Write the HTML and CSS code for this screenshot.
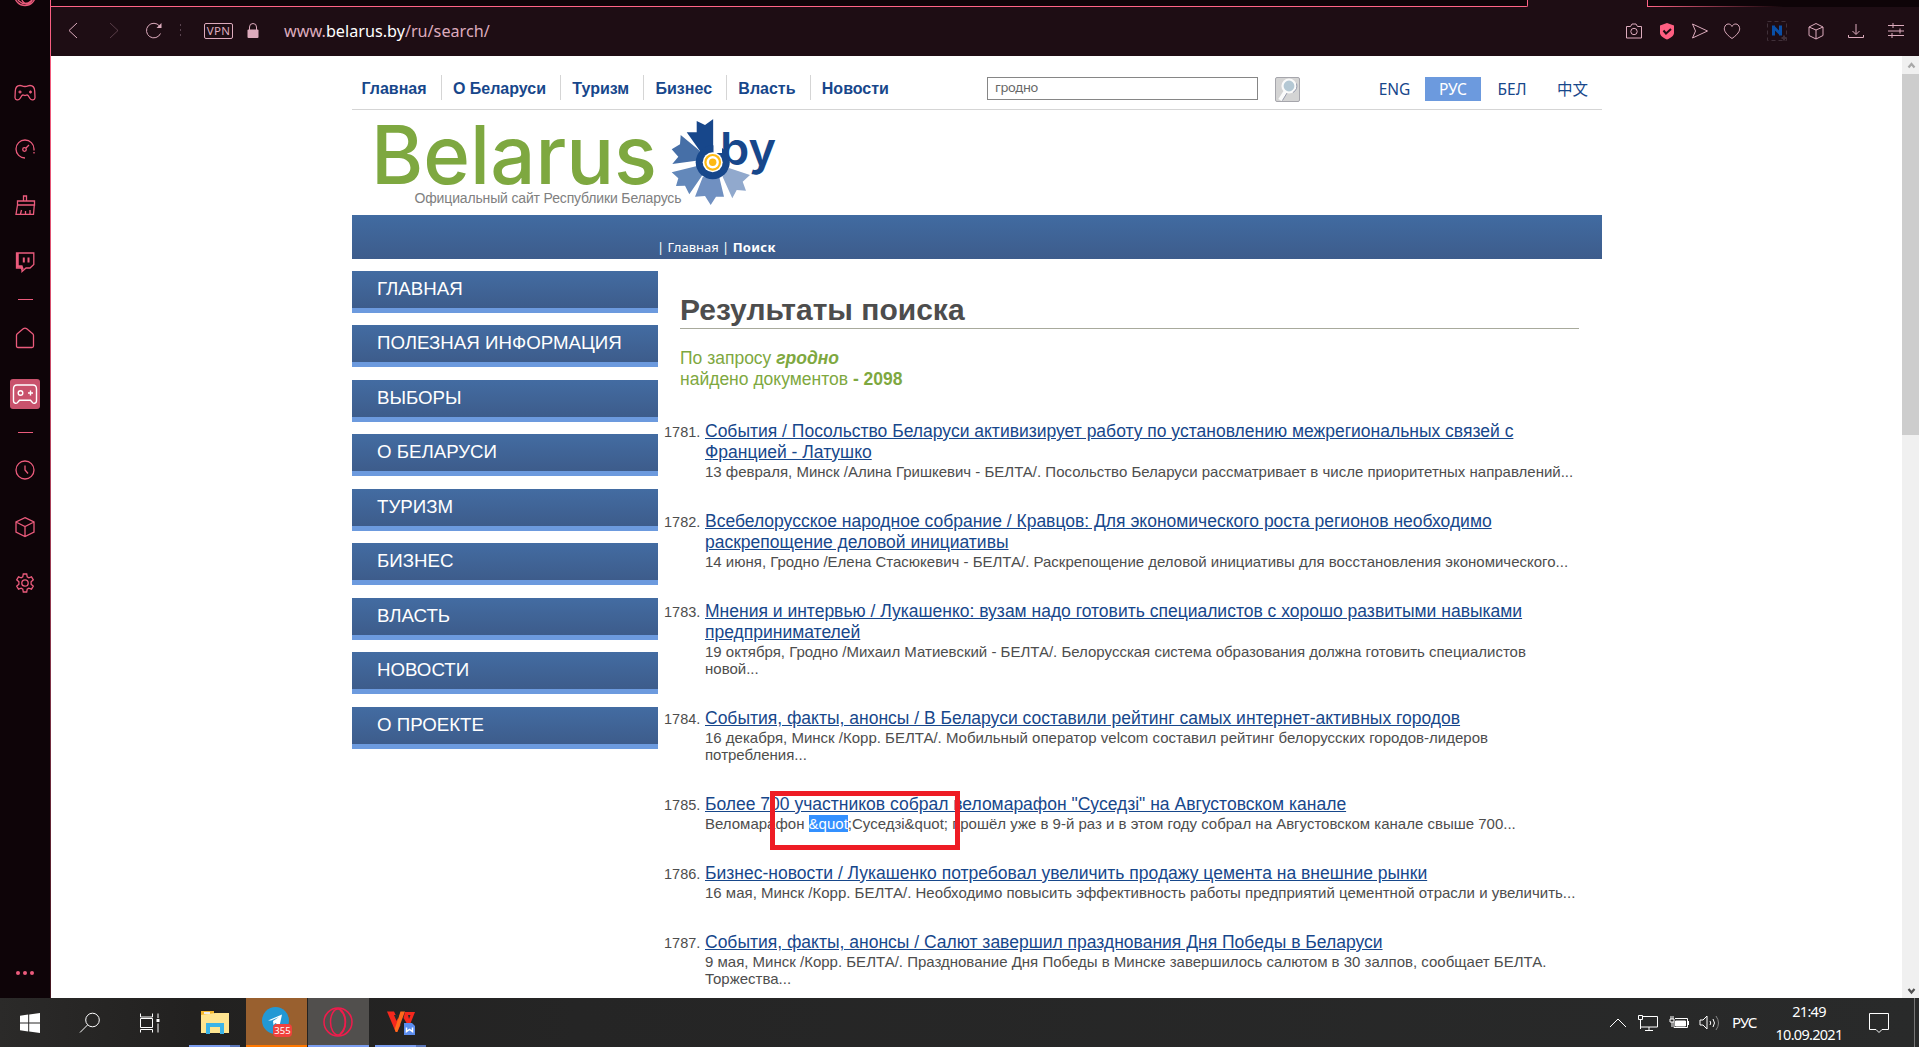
FILE: index.html
```
<!DOCTYPE html>
<html lang="ru">
<head>
<meta charset="utf-8">
<title>Результаты поиска</title>
<link rel="stylesheet" href="styles.css">
</head>
<body>
<div class="desktop">
  <div class="browser">
    <nav class="side">
      <div class="cell"><svg class="opera-top" width="24" height="12" viewBox="0 0 24 12"><circle cx="12" cy="-5" r="10.5"/><circle cx="12" cy="-5" r="8.5"/><ellipse cx="14" cy="-5" rx="6" ry="9"/></svg></div>
      <div class="cell"><svg width="22" height="18" viewBox="0 0 22 18"><path d="M6 1.5C3 1.500 1.500 3 1.300 7L1 13.500C1 16 4.500 17 6 14.500L8 11.500C9 10.300 10 11.500 11 11.500S13 10.300 14 11.500L16 14.500C17.500 17 21 16 21 13.500L20.700 7C20.500 3 19 1.500 16 1.500C14 1.500 14 2.500 11 2.500S8 1.500 6 1.500Z"/><path d="M4.500 8h3M6 6.500v3M15 8h3M16.500 6.500v3"/></svg></div>
      <div class="cell"><svg width="20" height="20" viewBox="0 0 20 20"><path d="M10 19A9 9 0 1 1 19 10"/><path d="M19 10v6" stroke-dasharray="1.500 1.500"/><circle cx="9.500" cy="10.500" r="1.800"/><path d="M11 9l3-3"/></svg></div>
      <div class="cell"><svg width="20" height="20" viewBox="0 0 20 20"><path d="M8.500 6V1h3v5M2.500 10V6h17v4zM2.500 10L1 19.300h17.500L19.300 10M5.500 19l1-4M10.500 19v-3M15 19v-4"/></svg></div>
      <div class="cell"><svg width="20" height="20" viewBox="0 0 20 20"><path d="M1.500 1h17.300v11.500L15 16h-4l-4 3.500V16H1.500z"/><path d="M2.500 1v13.500h4l1 3" stroke-width="2.500"/><path d="M8.800 5.500v5M13.500 5.500v5" stroke-width="2"/></svg></div>
      <div class="cell"><i class="dash"></i></div>
      <div class="cell"><svg width="20" height="22" viewBox="0 0 20 22"><path d="M1.500 8.500Q1.500 7.500 2.300 6.800L8.500 1.600Q10 .6 11.500 1.600L17.700 6.800Q18.500 7.500 18.500 8.500V19Q18.500 20.500 17 20.500H3Q1.500 20.500 1.500 19Z"/></svg></div>
      <div class="cell"><div class="active"><svg width="26" height="22" viewBox="0 0 26 22"><path d="M5 2H21Q24.500 2 24.500 6V17.500C24.500 21 21 21 20 19L18.500 17.200H7.500L6 19C5 21 1.500 21 1.500 17.500V6Q1.500 2 5 2Z"/><circle cx="8.500" cy="10" r="2.300"/><path d="M16 10h5M18.500 7.500v5"/></svg></div></div>
      <div class="cell"><i class="dash"></i></div>
      <div class="cell"><svg width="20" height="20" viewBox="0 0 20 20"><circle cx="10" cy="10" r="9"/><path d="M10 5.500V10l3 3.500"/></svg></div>
      <div class="cell"><svg width="20" height="20" viewBox="0 0 20 20"><path d="M10 .7L19 5v10l-9 4.500L1 15V5zM1 5l9 4.500L19 5M10 9.500v10"/></svg></div>
      <div class="cell"><svg width="20" height="20" viewBox="0 0 20 20"><path d="M8.300 1h3.400l.5 2.800 1.600 1 2.700-1 1.800 3-2.200 1.900v2.600l2.200 1.900-1.800 3-2.700-1-1.600 1-.5 2.800H8.300l-.5-2.800-1.600-1-2.700 1-1.800-3 2.200-1.900V8.700L1.700 6.800l1.800-3 2.700 1 1.600-1z"/><circle cx="10" cy="10" r="3.200"/></svg></div>
      <div class="cell"></div>
      <div class="cell"><svg width="20" height="6" viewBox="0 0 20 6"><g class="dots"><circle cx="3" cy="3" r="2"/><circle cx="10" cy="3" r="2"/><circle cx="17" cy="3" r="2"/></g></svg></div>
    </nav>

    <div class="window">
      <div class="tabs"><div class="tabs-left"></div><div class="tab"></div><div class="tabs-right"></div></div>
      <div class="toolbar">
        <svg class="back" width="10" height="17" viewBox="0 0 10 17"><path d="M9 1L1 8.500 9 16"/></svg>
        <svg class="fwd" width="10" height="17" viewBox="0 0 10 17"><path d="M1 1l8 7.500L1 16"/></svg>
        <svg class="reload" width="18" height="18" viewBox="0 0 18 18"><path d="M15.500 11.500A7.300 7.300 0 1 1 14.500 4"/><path d="M16.500 1v5h-5z" class="solid"/></svg>
        <i class="vdots"></i>
        <span class="vpn">VPN</span>
        <svg class="lock" width="12" height="17" viewBox="0 0 12 17"><path d="M2.500 8V5a3.500 3.500 0 0 1 7 0v3"/><rect class="solid" x=".5" y="7.500" width="11" height="8.500" rx="1"/></svg>
        <div class="url">www.<b>belarus.by</b>/ru/search/</div>
        <div class="tools">
          <svg viewBox="0 0 20 20"><path d="M2.500 5.500h4l1.500-2.500h4l1.500 2.500h4v11.500h-15z"/><circle cx="10" cy="10.500" r="3.200"/></svg>
          <svg viewBox="0 0 20 20"><path class="shield" d="M10 2l7 2.500v7.500c0 3-3.500 5-7 6.500-3.500-1.500-7-3.500-7-6.500V4.500z"/><path class="tick" d="M6.500 9.500l2.500 3 5-4.500"/></svg>
          <svg viewBox="0 0 20 20"><path d="M2.500 3L17.500 10 2.500 17l3-7z"/></svg>
          <svg viewBox="0 0 20 20"><path d="M10 17.500C2 12 2 8 2.500 6.500 3.500 2 8.500 2 10 5.500 11.500 2 16.500 2 17.500 6.500 18 8 18 12 10 17.500Z"/></svg>
          <svg viewBox="0 0 20 20"><rect class="ext" x=".5" y=".5" width="19" height="19"/><path class="n" d="M6.500 14.500V4.500M13.500 14.500V4.500"/><path class="n" d="M6.500 6l7 7"/><path class="plus" d="M17 14.500v5M14.500 17h5"/></svg>
          <svg viewBox="0 0 20 20"><path d="M10 2.500l7 3.500v8.500L10 18l-7-3.500V6zM3 6l7 3 7-3M10 9v9"/></svg>
          <svg viewBox="0 0 20 20"><path d="M10 3v10M6.500 10l3.500 3.500L13.500 10M2.500 14v2.500h15V14"/></svg>
          <svg viewBox="0 0 20 20"><path d="M2 4.500h16M2 10h16M2 14.500h16M7 2v5M14 7.500v5M6 12v5"/></svg>
        </div>
      </div>

      <div class="viewport">
        <main class="page">
          <header class="top">
            <nav class="topnav"><a>Главная</a><a>О Беларуси</a><a>Туризм</a><a>Бизнес</a><a>Власть</a><a>Новости</a></nav>
            <div class="search">гродно</div>
            <div class="go"><svg width="25" height="25" viewBox="0 0 25 25"><path d="M10.500 14.500L5 23" stroke="#fafafa" stroke-width="4"/><path d="M12 16L7.500 23.500" stroke="#9a9eb0" stroke-width="1"/><ellipse cx="14" cy="9" rx="6.500" ry="6.500" fill="#b4c8d4" stroke="#fafafa" stroke-width="2.200"/><path d="M18 15.500a8 8 0 0 0 3.500-9" fill="none" stroke="#989daf"/></svg></div>
            <div class="langs"><a>ENG</a><a class="on">РУС</a><a>БЕЛ</a><a>中文</a></div>
          </header>

          <div class="brand">
            <svg width="450" height="105" viewBox="0 0 450 105">
              <text class="name" x="19" y="74" textLength="286" lengthAdjust="spacingAndGlyphs">Belarus</text>
              <g>
                <path fill="#466fa7" d="M328.700 25L328 34.300 319.700 39.300 326.300 46.700 320.300 54 346 50.500 348 41Z"/>
                <path fill="#6388ba" d="M319.700 62.300L326.300 68.300 324 76 333 75.700 337.300 84.300 350.500 65 345 56Z"/>
                <path fill="#7090c1" d="M350.800 67L343 86.700 353 86 358.700 95 364 86.700 372 86.700 367.500 68Z"/>
                <path fill="#91a9cd" d="M370.500 66.500L380.300 88.300 384.700 80 394 80.700 390.700 71.700 398 65 377 58Z"/>
                <path fill="#17478b" d="M361.300 9L353 15 344.700 11V22.300H334.700L348 41 361.300 43Z"/>
                <circle cx="360.700" cy="52.300" r="17" fill="#17478b"/>
                <path d="M361.500 5h8.500v38h-8.500z" fill="#fff"/>
                <circle cx="360.700" cy="52.300" r="10" fill="#fff"/>
                <circle cx="360.700" cy="52.300" r="7.300" fill="none" stroke="#fdb913" stroke-width="2.200"/>
                <circle cx="360.700" cy="52.300" r="3.700" fill="#fdb913"/>
              </g>
              <text class="by" x="368" y="55" textLength="56" lengthAdjust="spacingAndGlyphs">by</text>
              <text class="motto" x="62.500" y="93" textLength="267">Официальный сайт Республики Беларусь</text>
            </svg>
          </div>

          <div class="crumbs">| <span>Главная</span> | <b>Поиск</b></div>

          <div class="columns">
            <nav class="menu"><a>ГЛАВНАЯ</a><a>ПОЛЕЗНАЯ ИНФОРМАЦИЯ</a><a>ВЫБОРЫ</a><a>О БЕЛАРУСИ</a><a>ТУРИЗМ</a><a>БИЗНЕС</a><a>ВЛАСТЬ</a><a>НОВОСТИ</a><a>О ПРОЕКТЕ</a></nav>
            <section class="results">
              <h1>Результаты поиска</h1>
              <p class="found">По запросу <b><i>гродно</i></b><br>найдено документов <b>- 2098</b></p>
              <ol>
                <li><span class="num">1781.</span><div><a>События / Посольство Беларуси активизирует работу по установлению межрегиональных связей с<br>Францией - Латушко</a><p>13 февраля, Минск /Алина Гришкевич - БЕЛТА/. Посольство Беларуси рассматривает в числе приоритетных направлений...</p></div></li>
                <li><span class="num">1782.</span><div><a>Всебелорусское народное собрание / Кравцов: Для экономического роста регионов необходимо<br>раскрепощение деловой инициативы</a><p>14 июня, Гродно /Елена Стасюкевич - БЕЛТА/. Раскрепощение деловой инициативы для восстановления экономического...</p></div></li>
                <li><span class="num">1783.</span><div><a>Мнения и интервью / Лукашенко: вузам надо готовить специалистов с хорошо развитыми навыками<br>предпринимателей</a><p>19 октября, Гродно /Михаил Матиевский - БЕЛТА/. Белорусская система образования должна готовить специалистов<br>новой...</p></div></li>
                <li><span class="num">1784.</span><div><a>События, факты, анонсы / В Беларуси составили рейтинг самых интернет-активных городов</a><p>16 декабря, Минск /Корр. БЕЛТА/. Мобильный оператор velcom составил рейтинг белорусских городов-лидеров<br>потребления...</p></div></li>
                <li class="marked"><span class="num">1785.</span><div><a>Более 700 участников собрал веломарафон "Суседзі" на Августовском канале</a><p>Веломарафон <mark>&amp;quot</mark>;Суседзі&amp;quot; прошёл уже в 9-й раз и в этом году собрал на Августовском канале свыше 700...</p></div><div class="frame"></div></li>
                <li><span class="num">1786.</span><div><a>Бизнес-новости / Лукашенко потребовал увеличить продажу цемента на внешние рынки</a><p>16 мая, Минск /Корр. БЕЛТА/. Необходимо повысить эффективность работы предприятий цементной отрасли и увеличить...</p></div></li>
                <li><span class="num">1787.</span><div><a>События, факты, анонсы / Салют завершил празднования Дня Победы в Беларуси</a><p>9 мая, Минск /Корр. БЕЛТА/. Празднование Дня Победы в Минске завершилось салютом в 30 залпов, сообщает БЕЛТА.<br>Торжества...</p></div></li>
              </ol>
            </section>
          </div>
        </main>
        <div class="scroll">
          <svg width="17" height="18" viewBox="0 0 17 18"><path d="M6.500 11.500l3-3.500 3 3.500" stroke="#a8a8a8"/></svg>
          <div class="thumb"></div>
          <svg width="17" height="17" viewBox="0 0 17 17"><path d="M6.500 8l3 3.500 3-3.500" stroke="#505050"/></svg>
        </div>
      </div>
    </div>
  </div>

  <footer class="taskbar">
    <div class="task start"><svg width="20" height="20" viewBox="0 0 20 20"><path fill="#fff" d="M0 2.800L8.200 1.600V9.500H0zM9.200 1.400L20 0V9.500H9.200zM0 10.500H8.200V18.500L0 17.300zM9.200 10.500H20V20L9.200 18.600z"/></svg></div>
    <div class="task find"><svg width="22" height="22" viewBox="0 0 22 22"><circle cx="13.500" cy="8" r="6.800"/><path d="M8.500 13L1 20.500"/></svg></div>
    <div class="task view"><svg width="22" height="20" viewBox="0 0 22 20"><path d="M1.500.5v3.500h12V.5M1.500 5.500h12v9h-12zM1.500 19.500V16.500h12v3M19 .5V5M19 10.500v9"/><path fill="#fff" stroke="none" d="M17.500 6h3v3h-3z"/></svg></div>
    <div class="task app files"><svg width="28" height="24" viewBox="0 0 28 24"><path fill="#f5b82e" d="M0 1h13v5H0z"/><path fill="#ffe590" d="M0 5l14-2h14v20H0z"/><path fill="#eee" d="M3 2h6v2H3z"/><path fill="#3bb4e8" d="M5 13h18v11h-4v-7H9v7H5z"/></svg></div>
    <div class="task app telegram"><svg width="30" height="32" viewBox="0 0 30 32"><circle cx="13.500" cy="14.500" r="13.500" fill="#2398d4"/><path fill="#fff" d="M6 14.500L20 8.500l-2.500 11.500-4-3-2 2-.5-4 6-4-8 3.500z"/><rect x="11" y="18" width="19" height="13" rx="4" fill="#f0413c"/><text x="12.300" y="28.400" textLength="16.500">355</text></svg></div>
    <div class="task app opera"><svg width="30" height="30" viewBox="0 0 30 30"><circle cx="15" cy="15" r="14"/><ellipse cx="15" cy="15" rx="7.500" ry="13"/><path d="M17 3c7 6 7 18 0 24"/></svg></div>
    <div class="task app wps"><svg width="30" height="26" viewBox="0 0 30 26"><g stroke="none"><path fill="#f5281d" d="M1 2.500H8L14.500 16 11.500 22.500Q10.500 23.500 9.500 22.500Z"/><path fill="#f5281d" d="M19 3H29L23 18 17.500 9Z"/><path fill="#2b2a29" d="M22 6h2.500l-1.500 4z"/><path fill="#ff6a1c" d="M14.500 2.500H19L11.500 22.500Q10.500 23.500 9.500 22.500L8.700 20Z"/><path fill="#2b2a29" d="M8 6l2.500 6L13 6z"/><path fill="#5b8def" d="M18 14h8l3 3v9H18z"/></g><path d="M20.500 18.500v4l3-2 3 2v-4" stroke="#fff" stroke-width="1.500"/></svg></div>
    <div class="tray">
      <svg width="18" height="12" viewBox="0 0 18 12"><path d="M1 10l8-8 8 8"/></svg>
      <svg width="22" height="18" viewBox="0 0 22 18"><path d="M6 2.500h14.500v10.500H3.500V8M12 13v3.500M8 16.500h8M1.500 1.500h4v4h-4zM3.500 5.500V15"/></svg>
      <svg width="20" height="18" viewBox="0 0 20 18"><path d="M6 4.500h12.500v9H5V8M1 5h4v3H1zM2 5V2M4 5V2M3 8v5M19.500 7v4"/><path fill="#fff" d="M6.500 7h10v5h-10z"/></svg>
      <svg width="22" height="18" viewBox="0 0 22 18"><path d="M1 6h3l4-4v13l-4-4H1zM11 7q1.500 2 0 4M14 5q3 4 0 8"/><path d="M17 2q5 7 0 14" stroke="#888"/></svg>
      <span class="lang">РУС</span>
      <div class="clock"><span>21:49</span><span>10.09.2021</span></div>
      <svg class="note" width="22" height="22" viewBox="0 0 22 22"><path d="M1.500 1.500h19V17.500H14L11 20.500 8 17.500H1.500z"/></svg>
      <i class="peek"></i>
    </div>
  </footer>
</div>
</body>
</html>
```
FILE: styles.css
```
* { box-sizing: border-box; }
body { margin: 0; font-family: "Liberation Sans", Arial, "Noto Sans CJK SC", sans-serif; }
h1, p, ol { margin: 0; padding: 0; }
svg { display: block; flex: none; fill: none; overflow: visible; }

.desktop { display: grid; grid-template-rows: 998px 49px; width: 1919px; height: 1047px; overflow: hidden; }
.browser { display: grid; grid-template-columns: 51px 1fr; min-height: 0; background: #0e0408; }

/* Browser sidebar */
.side {
  display: grid;
  grid-template-rows: 65px 56px 55px 58px 56px 18px 60px 52px 24px 52px 62px 50px 340px 50px;
  border-right: 1px solid;
  border-image: linear-gradient(#fa6083, #d8506f 30%, #7c3145 70%, #42151f) 1;
}
.cell { display: flex; align-items: center; justify-content: center; }
.cell:first-child { align-items: flex-start; }
.cell svg { stroke: #eb5b7c; stroke-width: 1.3; }
.cell .dots { fill: #eb5b7c; stroke: none; }
.dash { width: 15px; height: 1px; background: #eb5b7c; }
.active { display: flex; align-items: center; justify-content: center; width: 30px; height: 30px; border-radius: 3px; background: #c9526c; }
.active svg { stroke: #fff; stroke-width: 1.4; }

/* Tab strip and toolbar */
.window { display: grid; grid-template-rows: 7px 49px 1fr; min-width: 0; min-height: 0; background: #1e0d14; }
.tabs { display: grid; grid-template-columns: 1477px 119px 1fr; }
.tabs-left { background: #0e0408; border-bottom: 1px solid #ff6486; border-right: 1px solid #ff6486; border-bottom-right-radius: 2px; }
.tabs-right { background: linear-gradient(90deg, #ff6486, #0e0408 50%) bottom / 100% 1px no-repeat #0e0408; border-left: 1px solid #ff6486; }
.toolbar { display: flex; align-items: center; padding: 0 13px 2px 17px; stroke: #ddabbd; color: #ddabbd; }
.toolbar .solid { fill: #ddabbd; stroke: none; }
.fwd { margin-left: 31px; opacity: .3; }
.reload { margin-left: 26px; }
.vdots { width: 1px; height: 13px; margin-left: 17px; background: repeating-linear-gradient(#5a4450 0 2px, transparent 2px 5px); }
.vpn { width: 29px; height: 16px; margin-left: 23px; border: 1px solid #ddabbd; border-radius: 2px; font: 11.5px/14px "Noto Sans", sans-serif; letter-spacing: .3px; text-align: center; }
.lock { margin-left: 14px; }
.url { margin-left: 25px; font: 16.200px/24px "Noto Sans", sans-serif; white-space: nowrap; }
.url b { color: #fff; font-weight: 400; }
.tools { display: grid; grid-template-columns: 33px 33px 32px 45px 39px 40px 40px 20px; margin-left: auto; }
.tools svg { width: 20px; height: 20px; }
.tools .shield { fill: #ff5f82; stroke: none; }
.tools .tick { stroke: #1e0d14; stroke-width: 2; }
.tools .ext { stroke: #403039; stroke-dasharray: 4 3; }
.tools .n { stroke: #0a4fa6; stroke-width: 3; }
.tools .plus { stroke: #403039; stroke-width: 2; }

/* Web page */
.viewport { display: flex; min-height: 0; background: #fff; overflow: hidden; }
.page { width: 1250px; margin-left: 301px; }
.scroll { display: flex; flex-direction: column; width: 17px; margin-left: auto; background: #f0f0f0; stroke-width: 2.200; }
.thumb { height: 361px; margin-bottom: auto; background: #cdcdcd; }

.top { display: flex; height: 54px; padding-top: 19px; border-bottom: 1px solid #d5d5d5; }
.topnav { display: flex; width: 637px; height: 25px; color: #17478b; font-weight: 700; font-size: 16px; line-height: 27px; white-space: nowrap; }
.topnav a { padding: 0 14.300px 0 11px; }
.topnav a:first-child { padding-left: 9.500px; }
.topnav a + a { border-left: 1px solid #d5d5d5; }
.search { flex: none; width: 271px; height: 23px; margin-top: 2px; padding-left: 7px; border: 1px solid #868686; color: #666; font: 13px/19px "Noto Sans", sans-serif; letter-spacing: -.3px; }
.go { flex: none; width: 25px; height: 25px; margin: 2px 0 0 17px; border: 1px solid #a6a6ac; border-radius: 2px; background: #d4d4d4; }
.go svg { margin: -1px; }
.langs { flex: none; display: grid; grid-template-columns: 61px 56px 62px 59px; height: 23px; margin: 2px 0 0 64px; color: #17478b; font: 15.500px/24px "Noto Sans", "Noto Sans CJK SC", sans-serif; text-align: center; }
.langs .on { background: #6c9ade; color: #fff; }

.brand { height: 105px; }
.name { font: 500 81px Inter, sans-serif; fill: #7ea840; }
.by { font: 600 45px Inter, sans-serif; fill: #17478b; }
.motto { font: 14px "Liberation Sans", Arial, sans-serif; fill: #808080; }

.crumbs { height: 44px; padding: 22px 0 0 305px; background: linear-gradient(#416ba1, #3d5c8b); color: #fff; font: 13px/20px "Noto Sans", sans-serif; }
.crumbs b { letter-spacing: .3px; }
.columns { display: flex; padding-top: 12px; }
.menu { display: flex; flex-direction: column; gap: 12.450px; width: 306px; }
.menu a { height: 42px; padding-left: 25px; border-bottom: 5px solid #6c9ade; background: linear-gradient(#436ca2, #3d5c8b); color: #fff; font-size: 18.700px; line-height: 36px; }

.results { flex: 1; padding: 20px 23px 0 6px; }
h1 { height: 38px; margin-left: 16px; border-bottom: 1px solid #a8aa9c; color: #4d4d4d; font-size: 30px; line-height: 38px; }
.found { margin: 19px 0 31px 16px; color: #7ea840; font-size: 17.500px; line-height: 21px; }
ol { display: flex; flex-direction: column; gap: 31px; list-style: none; }
li { position: relative; display: flex; white-space: nowrap; }
.num { width: 41px; color: #4d4d4d; font-size: 14.500px; line-height: 22px; }
li a { display: block; color: #17478b; font-size: 17.500px; line-height: 21px; text-decoration: underline; }
li p { color: #4d4d4d; font-size: 15px; line-height: 17px; }
mark { background: #3390ff; color: #fff; }
.frame { position: absolute; left: 106px; top: -3px; width: 190px; height: 59px; border: 5px solid #ee1c24; }

/* Windows taskbar */
.taskbar { display: flex; background: linear-gradient(90deg, #2b2a29, #222120 10%, #252525 30%, #292a2a); color: #fff; stroke: #fff; }
.task { display: flex; align-items: center; justify-content: center; width: 60px; }
.start svg, .files svg, .telegram svg { stroke: none; }
.view { width: 60px; }
.app { border-bottom: 2px solid #7b9df0; }
.files { width: 51px; margin: 0 6px 0 9px; border-image: linear-gradient(90deg, #7b9df0 80%, #5b76b8 80%) 1; }
.telegram { width: 61px; background: #99602f; border-color: #ff7800; }
.telegram text { font: 9.500px "Noto Sans", sans-serif; fill: #fff; }
.opera { width: 61px; margin: 0 6px 0 1px; background: #514f4d; }
.opera svg { margin-right: 2px; stroke: #ef1c4c; stroke-width: 1.500; }
.wps { width: 51px; border-image: linear-gradient(90deg, #7b9df0 80%, #5b76b8 80%) 1; }
.tray { display: flex; align-items: center; margin-left: auto; font: 15px/23px "Noto Sans", sans-serif; }
.tray svg { margin-right: 10px; }
.tray svg:nth-child(4) { margin-right: 11px; }
.lang { width: 43px; letter-spacing: -.8px; }
.clock { display: flex; flex-direction: column; width: 68px; margin-right: 25px; text-align: center; letter-spacing: -.7px; font-size: 14.500px; white-space: nowrap; }
.tray .note { margin-right: 24px; }
.peek { width: 1px; height: 49px; margin-right: 4px; background: #777; }
```
